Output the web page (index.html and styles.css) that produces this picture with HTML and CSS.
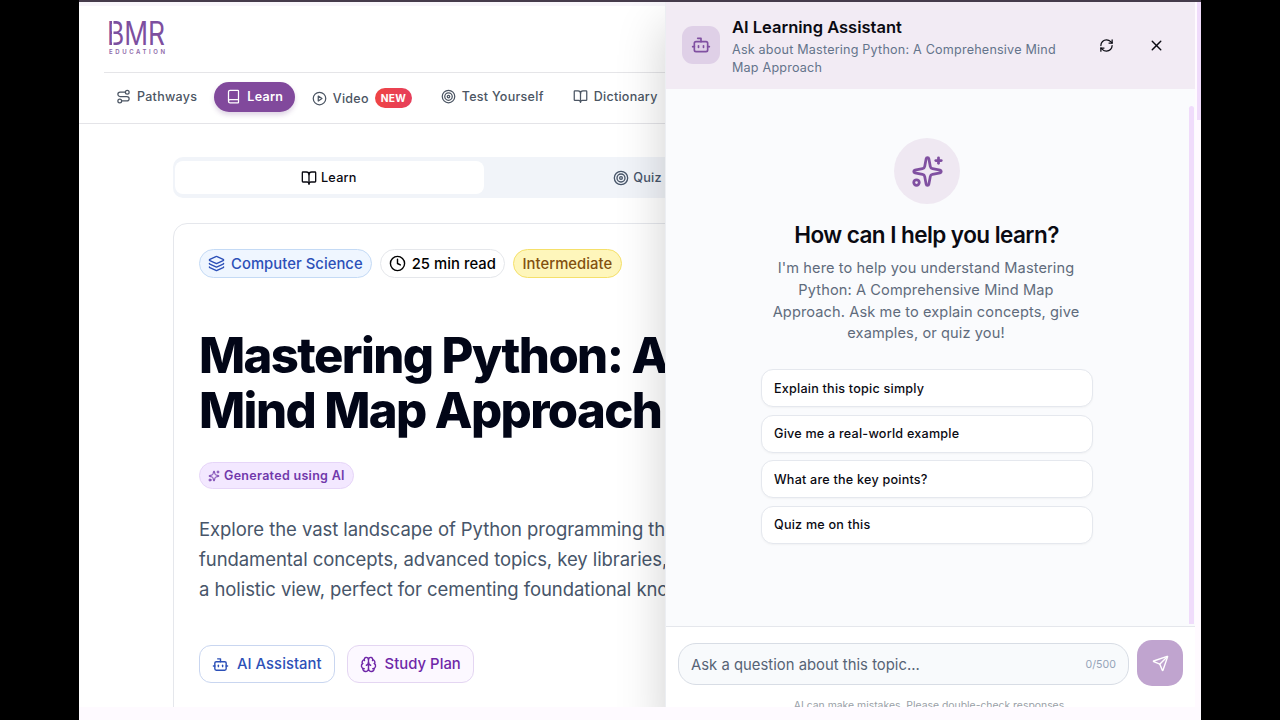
FILE: index.html
```html
<!DOCTYPE html>
<html lang="en">
<head>
  <meta charset="UTF-8">
  <meta name="viewport" content="width=device-width, initial-scale=1.0">
  <title>Mastering Python - BMR Education</title>
  <link rel="stylesheet" href="styles.css">
</head>
<body>

<!-- Shared icon set -->
<svg class="icon-defs" width="0" height="0">
  <symbol id="i-route" viewBox="0 0 24 24"><circle cx="6" cy="19" r="3"/><path d="M9 19h8.5a3.5 3.5 0 0 0 0-7h-11a3.5 3.5 0 0 1 0-7H15"/><circle cx="18" cy="5" r="3"/></symbol>
  <symbol id="i-book" viewBox="0 0 24 24"><path d="M4 19.5v-15A2.5 2.5 0 0 1 6.5 2H19a1 1 0 0 1 1 1v18a1 1 0 0 1-1 1H6.5a1 1 0 0 1 0-5H20"/></symbol>
  <symbol id="i-play" viewBox="0 0 24 24"><circle cx="12" cy="12" r="10"/><path d="m10 8 6 4-6 4z"/></symbol>
  <symbol id="i-target" viewBox="0 0 24 24"><circle cx="12" cy="12" r="10"/><circle cx="12" cy="12" r="6"/><circle cx="12" cy="12" r="2"/></symbol>
  <symbol id="i-open" viewBox="0 0 24 24"><path d="M12 7v14"/><path d="M3 18a1 1 0 0 1-1-1V4a1 1 0 0 1 1-1h5a4 4 0 0 1 4 4 4 4 0 0 1 4-4h5a1 1 0 0 1 1 1v13a1 1 0 0 1-1 1h-6a3 3 0 0 0-3 3 3 3 0 0 0-3-3z"/></symbol>
  <symbol id="i-layers" viewBox="0 0 24 24"><path d="M12.83 2.18a2 2 0 0 0-1.66 0L2.6 6.08a1 1 0 0 0 0 1.83l8.58 3.91a2 2 0 0 0 1.66 0l8.58-3.9a1 1 0 0 0 0-1.83z"/><path d="M2 12a1 1 0 0 0 .58.91l8.6 3.91a2 2 0 0 0 1.65 0l8.58-3.9A1 1 0 0 0 22 12"/><path d="M2 17a1 1 0 0 0 .58.91l8.6 3.91a2 2 0 0 0 1.65 0l8.58-3.9A1 1 0 0 0 22 17"/></symbol>
  <symbol id="i-clock" viewBox="0 0 24 24"><circle cx="12" cy="12" r="10"/><path d="M12 6v6l4 2"/></symbol>
  <symbol id="i-sparkles" viewBox="0 0 24 24"><path d="M11.017 2.814a1 1 0 0 1 1.966 0l1.051 5.558a2 2 0 0 0 1.594 1.594l5.558 1.051a1 1 0 0 1 0 1.966l-5.558 1.051a2 2 0 0 0-1.594 1.594l-1.051 5.558a1 1 0 0 1-1.966 0l-1.051-5.558a2 2 0 0 0-1.594-1.594l-5.558-1.051a1 1 0 0 1 0-1.966l5.558-1.051a2 2 0 0 0 1.594-1.594z"/><path d="M20 2v4"/><path d="M22 4h-4"/><circle cx="4" cy="20" r="2"/></symbol>
  <symbol id="i-bot" viewBox="0 0 24 24"><path d="M12 8V4H8"/><rect width="16" height="12" x="4" y="8" rx="2"/><path d="M2 14h2"/><path d="M20 14h2"/><path d="M15 13v2"/><path d="M9 13v2"/></symbol>
  <symbol id="i-brain" viewBox="0 0 24 24"><path d="M12 18V5"/><path d="M15 13a4.17 4.17 0 0 1-3-4 4.17 4.17 0 0 1-3 4"/><path d="M17.598 6.5A3 3 0 1 0 12 5a3 3 0 1 0-5.598 1.5"/><path d="M17.997 5.125a4 4 0 0 1 2.526 5.77"/><path d="M18 18a4 4 0 0 0 2-7.464"/><path d="M19.967 17.483A4 4 0 1 1 12 18a4 4 0 1 1-7.967-.517"/><path d="M6 18a4 4 0 0 1-2-7.464"/><path d="M6.003 5.125a4 4 0 0 0-2.526 5.77"/></symbol>
  <symbol id="i-refresh" viewBox="0 0 24 24"><path d="M3 12a9 9 0 0 1 9-9 9.75 9.75 0 0 1 6.74 2.74L21 8"/><path d="M21 3v5h-5"/><path d="M21 12a9 9 0 0 1-9 9 9.75 9.75 0 0 1-6.74-2.74L3 16"/><path d="M8 16H3v5"/></symbol>
  <symbol id="i-x" viewBox="0 0 24 24"><path d="M18 6 6 18"/><path d="m6 6 12 12"/></symbol>
  <symbol id="i-send" viewBox="0 0 24 24"><path d="M14.536 21.686a.5.5 0 0 0 .937-.024l6.5-19a.496.496 0 0 0-.635-.635l-19 6.5a.5.5 0 0 0-.024.937l7.93 3.18a2 2 0 0 1 1.112 1.11z"/><path d="m21.854 2.147-10.94 10.939"/></symbol>
</svg>

<div class="screen">
  <div class="viewport">

    <div class="page">
      <header class="site-header">
        <div class="brand">
          <svg class="logo" width="60" height="34" viewBox="0 0 60 34">
            <text class="logo-main" x="-1" y="24" textLength="58" lengthAdjust="spacingAndGlyphs">BMR</text>
            <rect class="logo-gap" x="4" y="0" width="1.5" height="25"/>
            <text class="logo-sub" x="1" y="32.5" textLength="56">EDUCATION</text>
          </svg>
        </div>
        <nav class="nav">
          <a class="nav-item pathways"><svg class="icon"><use href="#i-route"/></svg><span>Pathways</span></a>
          <a class="nav-item active"><svg class="icon"><use href="#i-book"/></svg><span>Learn</span></a>
          <a class="nav-item video"><svg class="icon"><use href="#i-play"/></svg><span>Video</span><span class="new">NEW</span></a>
          <a class="nav-item test"><svg class="icon"><use href="#i-target"/></svg><span>Test Yourself</span></a>
          <a class="nav-item dict"><svg class="icon"><use href="#i-open"/></svg><span>Dictionary</span></a>
        </nav>
      </header>

      <main class="content">
        <div class="tabs">
          <div class="tab selected"><svg class="icon"><use href="#i-open"/></svg><span>Learn</span></div>
          <div class="tab"><svg class="icon"><use href="#i-target"/></svg><span>Quiz</span></div>
          <div class="tab"></div>
        </div>

        <article class="card">
          <div class="badges">
            <span class="badge subject"><svg class="icon"><use href="#i-layers"/></svg><span>Computer Science</span></span>
            <span class="badge time"><svg class="icon"><use href="#i-clock"/></svg><span>25 min read</span></span>
            <span class="badge level"><span>Intermediate</span></span>
          </div>
          <h1 class="title"><span>Mastering Python: A</span><br><span>Mind Map Approach</span></h1>
          <div class="ai-badge"><svg class="icon"><use href="#i-sparkles"/></svg><span>Generated using AI</span></div>
          <p class="lead">Explore the vast landscape of Python programming through<br>fundamental concepts, advanced topics, key libraries,<br>a holistic view, perfect for cementing foundational know</p>
          <div class="actions">
            <button class="action assistant"><svg class="icon"><use href="#i-bot"/></svg><span>AI Assistant</span></button>
            <button class="action plan"><svg class="icon"><use href="#i-brain"/></svg><span>Study Plan</span></button>
          </div>
        </article>
      </main>
    </div>

    <!-- Assistant drawer, slides over the page -->
    <aside class="drawer">
      <div class="drawer-header">
        <div class="avatar"><svg class="icon"><use href="#i-bot"/></svg></div>
        <div class="drawer-heading">
          <h2>AI Learning Assistant</h2>
          <p>Ask about Mastering Python: A Comprehensive Mind<br>Map Approach</p>
        </div>
        <svg class="icon refresh"><use href="#i-refresh"/></svg>
        <svg class="icon close"><use href="#i-x"/></svg>
      </div>
      <div class="chat">
        <div class="welcome">
          <div class="welcome-icon"><svg class="icon"><use href="#i-sparkles"/></svg></div>
          <h3>How can I help you learn?</h3>
          <p>I'm here to help you understand Mastering<br>Python: A Comprehensive Mind Map<br>Approach. Ask me to explain concepts, give<br>examples, or quiz you!</p>
          <div class="prompts">
            <button>Explain this topic simply</button>
            <button>Give me a real-world example</button>
            <button>What are the key points?</button>
            <button>Quiz me on this</button>
          </div>
        </div>
        <div class="chat-scroll"></div>
      </div>
      <div class="composer">
        <div class="composer-row">
          <div class="input"><span>Ask a question about this topic...</span><span class="count">0/500</span></div>
          <button class="send"><svg class="icon"><use href="#i-send"/></svg></button>
        </div>
        <p class="note">AI can make mistakes. Please double-check responses.</p>
      </div>
    </aside>

    <div class="page-scroll"><div class="thumb"></div></div>
  </div>
</div>

</body>
</html>
```

FILE: styles.css
```css
* {
  box-sizing: border-box;
}

body {
  margin: 0;
  background: #000;
  font-family: Inter, "Liberation Sans", sans-serif;
  overflow: hidden;
}

h1, h2, h3, p {
  margin: 0;
}

button {
  font: inherit;
  letter-spacing: inherit;
}

.icon-defs {
  display: none;
}

.icon {
  flex: none;
  width: 15px;
  height: 15px;
  fill: none;
  stroke: currentColor;
  stroke-width: 2;
  stroke-linecap: round;
  stroke-linejoin: round;
}

.screen {
  width: 1122px;
  height: 720px;
  margin: 0 auto 0 79px;
  background: #fefaff;
  border-top: 2px solid #453b4b;
}

.viewport {
  position: relative;
  height: 705px;
  overflow: hidden;
  background: #fff;
}

/* Header */
.site-header {
  height: 122px;
  border-top: 4px solid #f8f6fb;
  border-bottom: 1px solid #e4e4e8;
}

.brand {
  height: 67px;
  margin-left: 25px;
  padding: 15px 0 0 4px;
  border-bottom: 1px solid #e5e5e8;
}

.logo {
  display: block;
}

.logo-main {
  font-size: 32px;
  font-weight: 400;
  fill: #7d4f9f;
}

.logo-gap {
  fill: #fff;
}

.logo-sub {
  font-size: 6px;
  font-weight: 600;
  fill: #8d68a8;
}

.nav {
  display: flex;
  height: 47px;
  padding-left: 37px;
  align-items: center;
  font-size: 12.5px;
  font-weight: 500;
  letter-spacing: 0.28px;
  color: #4b5563;
}

.nav-item {
  display: flex;
  align-items: center;
  gap: 6px;
  white-space: nowrap;
}

.nav-item.active {
  height: 30px;
  width: 81px;
  margin: 0 16.5px 0 17px;
  padding-left: 12px;
  border-radius: 15px;
  background: #81499c;
  color: #fff;
  font-weight: 600;
  box-shadow: 0 3px 5px rgba(90, 40, 120, 0.2);
}

.nav-item.video {
  padding-top: 3px;
}

.new {
  height: 20px;
  padding: 0 6px;
  border-radius: 10px;
  background: linear-gradient(90deg, #ef4444, #e63f5c);
  color: #fff;
  font-size: 10.2px;
  font-weight: 700;
  line-height: 20px;
}

.nav-item.test {
  margin-left: 28.5px;
}

.nav-item.dict {
  margin-left: 29px;
}

/* Lesson */
.content {
  width: 930px;
  margin-left: 94px;
  padding-top: 33px;
}

.tabs {
  display: grid;
  grid-template-columns: repeat(3, 1fr);
  height: 41px;
  padding: 4px 2px;
  border-radius: 10px;
  background: #f1f4f9;
}

.tab {
  display: flex;
  align-items: center;
  justify-content: center;
  gap: 4px;
  padding-right: 1px;
  font-size: 12.7px;
  font-weight: 500;
  letter-spacing: 0.2px;
  color: #475569;
}

.tab .icon {
  width: 16px;
  height: 16px;
}

.tab.selected {
  border-radius: 8px;
  background: #fff;
  color: #0a0a12;
}

.card {
  height: 600px;
  margin-top: 25px;
  padding: 25px;
  border: 1px solid #e5e7ec;
  border-radius: 14px;
}

.badges {
  display: flex;
  gap: 8px;
}

.badge {
  display: flex;
  align-items: center;
  gap: 6px;
  height: 29px;
  padding: 0 8px;
  border: 1px solid #e5e7eb;
  border-radius: 15px;
  font-size: 14.8px;
  font-weight: 500;
  letter-spacing: 0.05px;
  white-space: nowrap;
}

.badge .icon {
  width: 17px;
  height: 17px;
}

.badge.subject {
  background: #eff6ff;
  border-color: #c4daf5;
  color: #2c50b8;
}

.badge.level {
  padding: 0 8.5px;
  background: #fef6bb;
  border-color: #f5e06a;
  color: #82500f;
}

.title {
  margin-top: 50px;
  font-size: 49px;
  line-height: 55px;
  font-weight: 800;
  letter-spacing: -1.6px;
  color: #020617;
  white-space: nowrap;
}

.ai-badge {
  display: flex;
  align-items: center;
  gap: 4px;
  width: 155px;
  height: 27px;
  margin-top: 24px;
  padding-left: 8px;
  border: 1px solid #e6d5f8;
  border-radius: 14px;
  background: #f3e8ff;
  color: #7139ab;
  font-size: 12.5px;
  font-weight: 600;
  letter-spacing: 0.3px;
  white-space: nowrap;
}

.ai-badge .icon {
  width: 12px;
  height: 12px;
}

.lead {
  margin-top: 25px;
  font-size: 18.5px;
  line-height: 30px;
  letter-spacing: -0.07px;
  color: #475569;
  white-space: nowrap;
}

.actions {
  display: flex;
  gap: 12px;
  margin-top: 41px;
}

.action {
  display: flex;
  align-items: center;
  gap: 8px;
  height: 38px;
  padding: 0 12px;
  border: 1px solid #c9d6f0;
  border-radius: 12px;
  background: #fff;
  color: #2c50b8;
  font-size: 14.8px;
  font-weight: 500;
  letter-spacing: 0.05px;
  white-space: nowrap;
}

.action .icon {
  width: 17px;
  height: 17px;
}

.action.plan {
  border-color: #e4d6f2;
  background: #fcf8ff;
  color: #6f27a8;
}

/* Drawer */
.drawer {
  position: absolute;
  top: 0;
  left: 586px;
  width: 530px;
  height: 720px;
  background: #fff;
  border-left: 1px solid #eceef2;
  box-shadow: 0 23px 46px rgba(0, 0, 0, 0.19);
}

.drawer-header {
  display: flex;
  height: 87px;
  padding-left: 16px;
  background: #f2ebf4;
}

.avatar {
  display: grid;
  place-items: center;
  width: 38px;
  height: 38px;
  margin-top: 24px;
  border-radius: 11px;
  background: #dfd0e7;
  color: #8050a1;
}

.avatar .icon {
  width: 20px;
  height: 20px;
}

.drawer-heading {
  width: 379px;
  padding: 13px 0 0 12px;
  white-space: nowrap;
}

.drawer-heading h2 {
  font-size: 16.5px;
  line-height: 25px;
  font-weight: 600;
  color: #0a0a12;
}

.drawer-heading p {
  margin-top: 1px;
  font-size: 12.6px;
  line-height: 17.5px;
  letter-spacing: 0.2px;
  color: #64748b;
}

.refresh,
.close {
  margin-top: 36px;
  color: #0a0a12;
}

.close {
  width: 17px;
  height: 17px;
  margin: 35px 0 0 34px;
}

.chat {
  display: flex;
  justify-content: space-between;
  height: 537px;
  padding-right: 1px;
  background: #fafbfd;
}

.welcome {
  display: flex;
  flex-direction: column;
  align-items: center;
  width: 522px;
  padding-top: 49px;
}

.welcome-icon {
  display: grid;
  place-items: center;
  width: 66px;
  height: 66px;
  border-radius: 50%;
  background: #efe8f2;
  color: #8050a1;
}

.welcome-icon .icon {
  width: 33px;
  height: 33px;
}

.welcome h3 {
  margin-top: 15px;
  padding-right: 1px;
  font-size: 22.5px;
  line-height: 32px;
  font-weight: 600;
  letter-spacing: -0.55px;
  color: #0a0a12;
}

.welcome p {
  margin-top: 7px;
  padding-right: 2px;
  font-size: 14.6px;
  line-height: 21.8px;
  letter-spacing: 0.1px;
  color: #5f6b7c;
  text-align: center;
  white-space: nowrap;
}

.prompts {
  display: flex;
  flex-direction: column;
  gap: 7.6px;
  width: 332px;
  margin-top: 24px;
}

.prompts button {
  height: 38px;
  padding: 0 12px;
  border: 1px solid #e5e8ee;
  border-radius: 12px;
  background: #fff;
  box-shadow: 0 1px 2px rgba(0, 0, 0, 0.04);
  color: #0a0a12;
  font-size: 12.6px;
  font-weight: 500;
  letter-spacing: 0.22px;
  text-align: left;
}

.chat-scroll {
  width: 5px;
  height: 518px;
  margin-top: 17px;
  border-radius: 3px 3px 0 0;
  background: #f0dcfb;
}

.composer {
  padding: 13px 12px 0;
  border-top: 1px solid #e5e7ec;
}

.composer-row {
  display: flex;
  align-items: center;
  gap: 8px;
}

.input {
  display: flex;
  align-items: center;
  justify-content: space-between;
  width: 451px;
  height: 42px;
  margin-top: 2px;
  padding: 1px 12px 0;
  border: 1px solid #d8dde5;
  border-radius: 18px;
  background: #f8fafc;
  color: #566375;
  font-size: 14.8px;
  letter-spacing: 0.03px;
}

.count {
  font-size: 10.6px;
  color: #94a3b8;
}

.send {
  display: grid;
  place-items: center;
  width: 46px;
  height: 46px;
  padding: 0;
  border: 0;
  border-radius: 15px;
  background: #c0a4cf;
  color: #fff;
}

.send .icon {
  width: 17px;
  height: 17px;
}

.note {
  margin-top: 12px;
  font-size: 10.4px;
  line-height: 15px;
  color: #9a9fa8;
  text-align: center;
}

/* Page scrollbar, stays above the drawer */
.page-scroll {
  position: absolute;
  top: 0;
  right: 0;
  width: 6px;
  height: 705px;
  padding-left: 2px;
  background: #fffaff;
}

.thumb {
  height: 118px;
  background: #f0dcfb;
}
```
